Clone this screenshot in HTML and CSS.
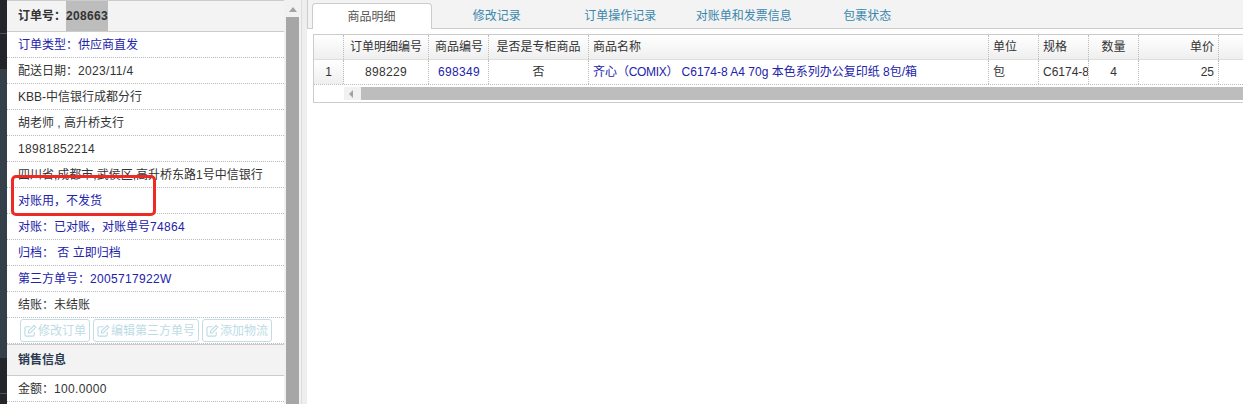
FILE: index.html
```html
<!DOCTYPE html>
<html lang="zh-CN">
<head>
<meta charset="utf-8">
<title>订单详情</title>
<link rel="stylesheet" href="styles.css">
</head>
<body>
<div class="page">
  <div class="backdrop"></div>
  <aside class="side">
    <div class="panel">
      <div class="head">订单号：<span class="sel n">208663</span></div>
      <div class="row blue">订单类型：供应商直发</div>
      <div class="row">配送日期：<span class="n">2023/11/4</span></div>
      <div class="row">KBB-中信银行成都分行</div>
      <div class="row">胡老师 , 高升桥支行</div>
      <div class="row"><span class="n">18981852214</span></div>
      <div class="row">四川省,成都市,武侯区,高升桥东路1号中信银行</div>
      <div class="row blue">对账用，不发货</div>
      <div class="row blue">对账：已对账，对账单号<span class="n">74864</span></div>
      <div class="row blue">归档： 否 立即归档</div>
      <div class="row blue">第三方单号：<span class="n">2005717922W</span></div>
      <div class="row">结账：未结账</div>
      <div class="btns">
        <span class="btn"><svg class="ico" viewBox="0 0 14 14"><path d="M11 8.500v3a1.500 1.500 0 0 1-1.500 1.500H2.500A1.500 1.500 0 0 1 1 11.500v-7A1.500 1.500 0 0 1 2.500 3H7"/><path d="M5 7.500 10.800 1.700l1.900 1.900L6.900 9.400 4.700 9.800z"/></svg>修改订单</span>
        <span class="btn"><svg class="ico" viewBox="0 0 14 14"><path d="M11 8.500v3a1.500 1.500 0 0 1-1.500 1.500H2.500A1.500 1.500 0 0 1 1 11.500v-7A1.500 1.500 0 0 1 2.500 3H7"/><path d="M5 7.500 10.800 1.700l1.900 1.900L6.900 9.400 4.700 9.800z"/></svg>编辑第三方单号</span>
        <span class="btn"><svg class="ico" viewBox="0 0 14 14"><path d="M11 8.500v3a1.500 1.500 0 0 1-1.500 1.500H2.500A1.500 1.500 0 0 1 1 11.500v-7A1.500 1.500 0 0 1 2.500 3H7"/><path d="M5 7.500 10.800 1.700l1.900 1.900L6.900 9.400 4.700 9.800z"/></svg>添加物流</span>
      </div>
      <div class="head sub">销售信息</div>
      <div class="row">金额：<span class="n">100.0000</span></div>
    </div>
    <div class="vbar"><div class="arrow-up"></div><div class="vthumb"></div></div>
  </aside>
  <div class="splitter"></div>
  <main class="main">
    <nav class="tabs">
      <span class="tab active">商品明细</span>
      <span class="tab">修改记录</span>
      <span class="tab">订单操作记录</span>
      <span class="tab">对账单和发票信息</span>
      <span class="tab">包裹状态</span>
    </nav>
    <div class="grid">
      <div class="tr th">
        <span class="c c0"></span>
        <span class="c c1 ctr">订单明细编号</span>
        <span class="c c2 ctr">商品编号</span>
        <span class="c c3 ctr">是否是专柜商品</span>
        <span class="c c4">商品名称</span>
        <span class="c c5">单位</span>
        <span class="c c6">规格</span>
        <span class="c c7 ctr">数量</span>
        <span class="c c8 rt">单价</span>
        <span class="c c9"></span>
      </div>
      <div class="tr td">
        <span class="c c0">1</span>
        <span class="c c1 ctr n">898229</span>
        <span class="c c2 ctr link n">698349</span>
        <span class="c c3 ctr">否</span>
        <span class="c c4 link">齐心<span class="tight">（COMIX）</span> C6174-8 A4 70g 本色系列办公复印纸 8包/箱</span>
        <span class="c c5">包</span>
        <span class="c c6">C6174-8</span>
        <span class="c c7 ctr">4</span>
        <span class="c c8 rt">25</span>
        <span class="c c9"></span>
      </div>
      <div class="hbar"><span class="harrow"></span><span class="hthumb"></span></div>
    </div>
  </main>
</div>
<div class="mark"></div>
</body>
</html>
```
FILE: styles.css
```css
* { box-sizing: border-box; }
html, body { margin: 0; height: 404px; overflow: hidden; background: #fff; }
body { font: 12px/26px "Liberation Sans", "Noto Sans CJK SC", sans-serif; color: #333; }
.page { display: flex; height: 404px; position: relative; }
.backdrop { width: 7px; flex: none; background: linear-gradient(#22252a 0 33px, #50535a 33px 34px, #22252a 34px 69px, #353f49 69px 358px, #22252a 358px 393px, #50535a 393px 394px, #22252a 394px); }
.side { width: 294px; flex: none; display: flex; background: #fff; }
.panel { width: 277px; flex: none; }
.head { height: 32px; line-height: 30px; padding-left: 11px; background: #f3f3f3; border-top: 1px solid #ccc; border-bottom: 1px solid #ccc; font-weight: bold; }
.head.sub { color: #2c3a50; }
.sel { background: #bdbdbd; display: inline-block; height: 30px; }
.n { letter-spacing: .33px; }
.tight { letter-spacing: -.3px; }
.row { height: 26px; line-height: 27px; padding-left: 11px; border-bottom: 1px dotted #bbb; white-space: nowrap; }
.blue { color: #2222aa; }
.btns { height: 26px; padding: 1px 0 0 13px; display: flex; gap: 3px; border-bottom: 1px dotted #bbb; }
.btn { height: 23px; border: 1px solid #c3dde6; border-radius: 3px; color: #bcdbe6; padding: 0 3px; display: flex; align-items: center; }
.ico { width: 13px; height: 13px; margin-right: 1px; fill: none; stroke: #bcdbe6; stroke-width: 1.200; }
.vbar { width: 17px; flex: none; padding: 0 2px; background: #f1f1f1; }
.arrow-up { height: 17px; padding-top: 7px; }
.arrow-up::before { content: ""; display: block; margin: 0 auto; width: 0; height: 0; border: 4px solid transparent; border-top: 0; border-bottom: 5px solid #a3a3a3; }
.vthumb { height: 387px; background: #a6a6a6; }
.splitter { width: 6px; flex: none; background: #eee; border-left: 1px solid #ddd; }
.main { flex: 1; min-width: 0; }
.tabs { height: 29px; display: flex; background: #f3f3f3; border-left: 1px solid #ccc; border-bottom: 1px solid #ccc; padding: 3px 0 0 4px; }
.tab { width: 123.5px; height: 25px; line-height: 26px; color: #3a87ad; text-align: center; }
.tab.active { width: 120px; height: 26px; margin-right: 3px; padding-right: 1px; color: #555; background: #fff; border: 1px solid #ccc; border-bottom: 0; border-radius: 4px 4px 0 0; }
.grid { margin: 5px 0 0 6px; width: 936px; border: 1px solid #ccc; border-right: 0; height: 69px; }
.tr { display: flex; height: 25px; line-height: 24px; }
.th { background: linear-gradient(#fff, #efefef); border-bottom: 1px solid #ddd; }
.td { border-bottom: 1px dotted #bbb; }
.c { flex: none; padding: 0 4px; border-right: 1px dotted #bbb; white-space: nowrap; overflow: hidden; }
.c0 { width: 30px; text-align: center; background: linear-gradient(#fff, #efefef); }
.c1 { width: 85px; }
.c2 { width: 60px; padding-left: 5px; }
.c3 { width: 100px; }
.c4 { width: 400px; }
.c5 { width: 50px; }
.c6 { width: 50px; padding-right: 0; }
.c7 { width: 50px; }
.c8 { width: 80px; }
.c9 { width: 31px; border-right: 0; }
.ctr { text-align: center; }
.rt { text-align: right; }
.link { color: #2222aa; }
.hbar { height: 17px; display: flex; padding: 2px 0; }
.harrow { width: 17px; margin-left: 30px; background: #f1f1f1; position: relative; height: 13px; }
.harrow::before { content: ""; position: absolute; left: 5px; top: 3px; border: 4px solid transparent; border-left: 0; border-right: 4px solid #a3a3a3; }
.hthumb { flex: 1; height: 13px; background: #bdbdbd; }
.mark { position: absolute; left: 11px; top: 175px; width: 145px; height: 41px; border: 3px solid #ee2a24; border-radius: 5px; }
```
